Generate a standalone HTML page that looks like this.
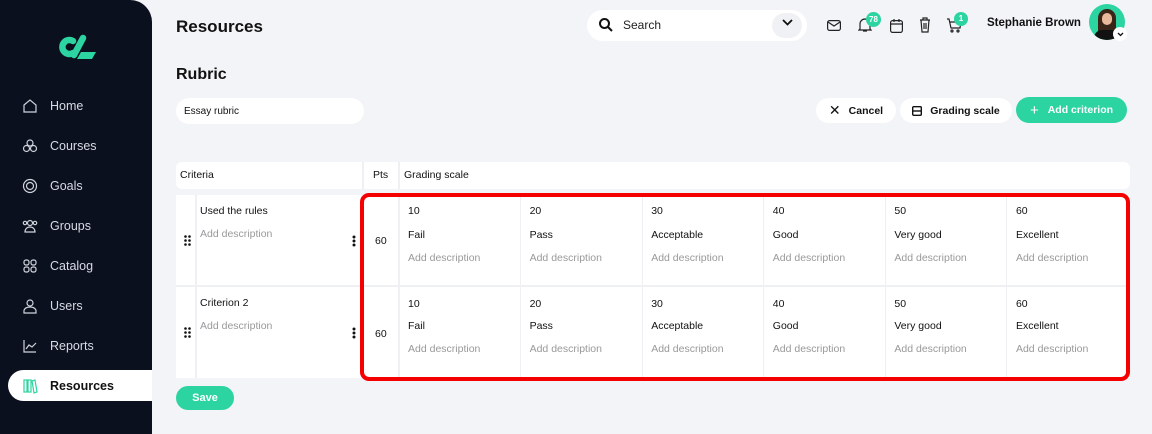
<!DOCTYPE html>
<html><head><style>
*{margin:0;padding:0;box-sizing:border-box}
body{width:1152px;height:434px;overflow:hidden;background:#f2f4f8;font-family:"Liberation Sans",sans-serif;position:relative;color:#111}
.sb{position:absolute;left:0;top:0;width:152px;height:434px;background:#0b101e;border-top-right-radius:22px}
.nav{position:absolute;left:22px;color:#d6dae4;font-size:12.5px;display:flex;align-items:center}
.nav svg{width:16px;height:16px;margin-right:12px}
.act{position:absolute;left:8px;top:370px;width:144px;height:31px;background:#fff;border-radius:16px 0 0 16px}
.a{position:absolute}
.btn{position:absolute;height:25px;border-radius:13px;background:#fff;font-size:10.5px;font-weight:bold;display:flex;align-items:center;justify-content:center}
.w{background:#fff}
.t11{font-size:10.5px}
.g{color:#999;font-size:10.5px}
</style></head><body>
<div class="sb"></div>
<svg class="a" style="left:56px;top:33px" width="42" height="28" viewBox="0 0 42 28"><path d="M17 8 A7 7 0 1 0 17 20" stroke="#2bd4a0" stroke-width="6.5" fill="none" stroke-linecap="round"/><path d="M18 22 L27 5" stroke="#2bd4a0" stroke-width="6.5" stroke-linecap="round"/><path d="M25 19 H40 L36 26 H21 Z" fill="#2bd4a0"/></svg>
<div class="act"></div>
<div class="nav" style="top:98px"><svg viewBox="0 0 16 16" fill="none" stroke="#cfd3dc" stroke-width="1.2"><path d="M2 7L8 2l6 5v7H2z"/></svg>Home</div>
<div class="nav" style="top:138px"><svg viewBox="0 0 16 16" fill="none" stroke="#cfd3dc" stroke-width="1.2"><circle cx="8" cy="5" r="3"/><circle cx="4.5" cy="10.5" r="3"/><circle cx="11.5" cy="10.5" r="3"/></svg>Courses</div>
<div class="nav" style="top:178px"><svg viewBox="0 0 16 16" fill="none" stroke="#cfd3dc" stroke-width="1.2"><circle cx="8" cy="8" r="6.5"/><circle cx="8" cy="8" r="3.5"/></svg>Goals</div>
<div class="nav" style="top:218px"><svg viewBox="0 0 16 16" fill="none" stroke="#cfd3dc" stroke-width="1.2"><circle cx="8" cy="5" r="2.5"/><path d="M3 14c0-3 2-5 5-5s5 2 5 5z"/><circle cx="3" cy="5" r="1.7"/><circle cx="13" cy="5" r="1.7"/></svg>Groups</div>
<div class="nav" style="top:258px"><svg viewBox="0 0 16 16" fill="none" stroke="#cfd3dc" stroke-width="1.2"><rect x="2" y="2" width="5" height="5" rx="2"/><rect x="9" y="2" width="5" height="5" rx="2"/><rect x="2" y="9" width="5" height="5" rx="2"/><rect x="9" y="9" width="5" height="5" rx="2"/></svg>Catalog</div>
<div class="nav" style="top:298px"><svg viewBox="0 0 16 16" fill="none" stroke="#cfd3dc" stroke-width="1.2"><circle cx="8" cy="5" r="3"/><path d="M2 15v-2c0-2 2-4 6-4s6 2 6 4v2z"/></svg>Users</div>
<div class="nav" style="top:338px"><svg viewBox="0 0 16 16" fill="none" stroke="#cfd3dc" stroke-width="1.2"><path d="M2 2v12h12M4 11l3-4 3 2 4-4"/></svg>Reports</div>
<div class="nav" style="top:378px;color:#111;font-weight:bold"><svg viewBox="0 0 16 16" fill="none" stroke="#2bd4a0" stroke-width="1.2"><rect x="2" y="2" width="3" height="12"/><rect x="6" y="2" width="3" height="12"/><path d="M10 3l3-1 2 12-3 1z"/></svg>Resources</div>

<div class="a" style="left:176px;top:17px;font-size:17px;font-weight:bold">Resources</div>
<div class="a" style="left:176px;top:66px;font-size:16px;font-weight:bold">Rubric</div>
<div class="a w" style="left:176px;top:98px;width:188px;height:26px;border-radius:13px;font-size:10px;padding:8px 8px">Essay rubric</div>

<div class="a w" style="left:587px;top:10px;width:220px;height:31px;border-radius:16px"></div>
<svg class="a" style="left:598px;top:17px" width="16" height="16" viewBox="0 0 16 16" fill="none" stroke="#111" stroke-width="2"><circle cx="6.5" cy="6.5" r="4.5"/><path d="M10 10l4 4"/></svg>
<div class="a" style="left:623px;top:18px;color:#222;font-size:12px">Search</div>
<div class="a" style="left:772px;top:13px;width:30px;height:25px;border-radius:13px;background:#f0f1f4"></div>
<svg class="a" style="left:782px;top:19px" width="11" height="8" viewBox="0 0 11 8" fill="none" stroke="#111" stroke-width="1.8"><path d="M1 1l4.5 4.5L10 1"/></svg>
<svg class="a" style="left:827px;top:20px" width="14" height="11" viewBox="0 0 14 11" fill="none" stroke="#222" stroke-width="1.2"><rect x=".6" y=".6" width="12.8" height="9.8" rx="2"/><path d="M1 2l6 4 6-4"/></svg>
<svg class="a" style="left:858px;top:17px" width="14" height="16" viewBox="0 0 14 16" fill="none" stroke="#222" stroke-width="1.2"><path d="M2 12V7a5 5 0 0110 0v5l1 1H1z M5 14h4"/></svg>
<div class="a" style="left:866px;top:12px;width:15px;height:15px;border-radius:8px;background:#2bd4a0;color:#fff;font-size:8px;font-weight:bold;text-align:center;line-height:15px">78</div>
<svg class="a" style="left:890px;top:18px" width="13" height="15" viewBox="0 0 13 15" fill="none" stroke="#222" stroke-width="1.2"><rect x=".6" y="2.6" width="11.8" height="11.8" rx="2"/><path d="M.6 6h11.8M4 1v3M9 1v3"/></svg>
<svg class="a" style="left:919px;top:17px" width="12" height="16" viewBox="0 0 12 16" fill="none" stroke="#222" stroke-width="1.2"><path d="M1 3h10M4 3V1h4v2M2 3l1 12h6l1-12M5 6v6M7 6v6"/></svg>
<svg class="a" style="left:946px;top:18px" width="16" height="15" viewBox="0 0 16 15" fill="none" stroke="#222" stroke-width="1.2"><path d="M1 1h2l2 9h9l1-6H4"/><circle cx="6" cy="13" r="1"/><circle cx="12" cy="13" r="1"/></svg>
<div class="a" style="left:954px;top:12px;width:14px;height:14px;border-radius:7px;background:#2bd4a0;color:#fff;font-size:8px;font-weight:bold;text-align:center;line-height:14px">1</div>
<div class="a" style="left:987px;top:17px;font-size:11.5px;font-weight:bold">Stephanie Brown</div>
<div class="a" style="left:1089px;top:4px;width:36px;height:36px;border-radius:18px;background:#2bd4a0;overflow:hidden"><div style="position:absolute;left:9px;top:5px;width:18px;height:30px;border-radius:9px 9px 0 0;background:#3a2418"></div><div style="position:absolute;left:13px;top:9px;width:10px;height:12px;border-radius:5px;background:#e8b89a"></div><div style="position:absolute;left:5px;top:26px;width:26px;height:14px;border-radius:8px 8px 0 0;background:#111"></div></div>
<div class="a" style="left:1113px;top:27px;width:14px;height:14px;border-radius:7px;background:#fff"></div>
<svg class="a" style="left:1117px;top:32px" width="7" height="5" viewBox="0 0 7 5" fill="none" stroke="#111" stroke-width="1.3"><path d="M1 1l2.5 2.5L6 1"/></svg>

<div class="btn" style="left:816px;top:98px;width:80px"><span style="font-size:14px;font-weight:normal;margin-right:8px">✕</span>Cancel</div>
<div class="btn" style="left:900px;top:98px;width:112px"><svg width="10" height="10" viewBox="0 0 10 10" fill="none" stroke="#111" stroke-width="1.4" style="margin-right:8px"><rect x=".7" y=".7" width="8.6" height="8.6" rx="1"/><path d="M.7 5h8.6"/></svg>Grading scale</div>
<div class="btn" style="left:1016px;top:97px;width:111px;height:26px;background:#2bd4a0;color:#fff"><span style="font-size:15px;font-weight:normal;margin-right:9px">+</span>Add criterion</div>

<div class="a w" style="left:176px;top:162px;width:954px;height:27px;border-radius:6px"></div>
<div class="a" style="left:362px;top:162px;width:2px;height:27px;background:#eef0f4"></div>
<div class="a" style="left:398px;top:162px;width:2px;height:27px;background:#eef0f4"></div>
<div class="a t11" style="left:180px;top:169px">Criteria</div>
<div class="a t11" style="left:373px;top:169px">Pts</div>
<div class="a t11" style="left:404px;top:169px">Grading scale</div>

<div class="a w" style="left:176px;top:195px;width:954px;height:183px"></div>
<div class="a" style="left:176px;top:285px;width:954px;height:2px;background:#eef0f4"></div>
<div class="a" style="left:195px;top:195px;width:2px;height:183px;background:#eef0f4"></div>
<div class="a" style="left:398px;top:195px;width:2px;height:183px;background:#eef0f4"></div>
<div class="a" style="left:520px;top:195px;width:1px;height:183px;background:#eef0f4"></div>
<div class="a" style="left:642px;top:195px;width:1px;height:183px;background:#eef0f4"></div>
<div class="a" style="left:763px;top:195px;width:1px;height:183px;background:#eef0f4"></div>
<div class="a" style="left:885px;top:195px;width:1px;height:183px;background:#eef0f4"></div>
<div class="a" style="left:1006px;top:195px;width:1px;height:183px;background:#eef0f4"></div>

<div class="a t11" style="left:200px;top:205px">Used the rules</div>
<div class="a g" style="left:200px;top:228px">Add description</div>
<div class="a t11" style="left:200px;top:297px">Criterion 2</div>
<div class="a g" style="left:200px;top:320px">Add description</div>
<svg class="a" style="left:184px;top:235px" width="7" height="11" viewBox="0 0 7 11" fill="#111"><circle cx="1.5" cy="1.5" r="1.3"/><circle cx="5.5" cy="1.5" r="1.3"/><circle cx="1.5" cy="5.5" r="1.3"/><circle cx="5.5" cy="5.5" r="1.3"/><circle cx="1.5" cy="9.5" r="1.3"/><circle cx="5.5" cy="9.5" r="1.3"/></svg>
<svg class="a" style="left:184px;top:327px" width="7" height="11" viewBox="0 0 7 11" fill="#111"><circle cx="1.5" cy="1.5" r="1.3"/><circle cx="5.5" cy="1.5" r="1.3"/><circle cx="1.5" cy="5.5" r="1.3"/><circle cx="5.5" cy="5.5" r="1.3"/><circle cx="1.5" cy="9.5" r="1.3"/><circle cx="5.5" cy="9.5" r="1.3"/></svg>
<svg class="a" style="left:352px;top:235px" width="4" height="12" viewBox="0 0 4 12" fill="#111"><circle cx="2" cy="2" r="1.5"/><circle cx="2" cy="6" r="1.5"/><circle cx="2" cy="10" r="1.5"/></svg>
<svg class="a" style="left:352px;top:327px" width="4" height="12" viewBox="0 0 4 12" fill="#111"><circle cx="2" cy="2" r="1.5"/><circle cx="2" cy="6" r="1.5"/><circle cx="2" cy="10" r="1.5"/></svg>
<div class="a t11" style="left:375px;top:235px">60</div>
<div class="a t11" style="left:375px;top:328px">60</div>

<div class="a" style="left:408px;top:205px;width:730px">
<div style="display:flex"><div style="width:121.6px"><div class="t11">10</div><div class="t11" style="margin-top:12px">Fail</div><div class="g" style="margin-top:11px">Add description</div></div>
<div style="width:121.6px"><div class="t11">20</div><div class="t11" style="margin-top:12px">Pass</div><div class="g" style="margin-top:11px">Add description</div></div>
<div style="width:121.6px"><div class="t11">30</div><div class="t11" style="margin-top:12px">Acceptable</div><div class="g" style="margin-top:11px">Add description</div></div>
<div style="width:121.6px"><div class="t11">40</div><div class="t11" style="margin-top:12px">Good</div><div class="g" style="margin-top:11px">Add description</div></div>
<div style="width:121.6px"><div class="t11">50</div><div class="t11" style="margin-top:12px">Very good</div><div class="g" style="margin-top:11px">Add description</div></div>
<div style="width:121.6px"><div class="t11">60</div><div class="t11" style="margin-top:12px">Excellent</div><div class="g" style="margin-top:11px">Add description</div></div></div>
</div>
<div class="a" style="left:408px;top:298px;width:730px">
<div style="display:flex"><div style="width:121.6px"><div class="t11">10</div><div class="t11" style="margin-top:10px">Fail</div><div class="g" style="margin-top:11px">Add description</div></div>
<div style="width:121.6px"><div class="t11">20</div><div class="t11" style="margin-top:10px">Pass</div><div class="g" style="margin-top:11px">Add description</div></div>
<div style="width:121.6px"><div class="t11">30</div><div class="t11" style="margin-top:10px">Acceptable</div><div class="g" style="margin-top:11px">Add description</div></div>
<div style="width:121.6px"><div class="t11">40</div><div class="t11" style="margin-top:10px">Good</div><div class="g" style="margin-top:11px">Add description</div></div>
<div style="width:121.6px"><div class="t11">50</div><div class="t11" style="margin-top:10px">Very good</div><div class="g" style="margin-top:11px">Add description</div></div>
<div style="width:121.6px"><div class="t11">60</div><div class="t11" style="margin-top:10px">Excellent</div><div class="g" style="margin-top:11px">Add description</div></div></div>
</div>

<div class="a" style="left:360px;top:193px;width:770px;height:188px;border:4px solid #f50000;border-radius:9px"></div>

<div class="a" style="left:176px;top:386px;width:58px;height:24px;border-radius:12px;background:#2bd4a0;color:#fff;font-size:11px;font-weight:bold;text-align:center;line-height:24px">Save</div>
</body></html>
